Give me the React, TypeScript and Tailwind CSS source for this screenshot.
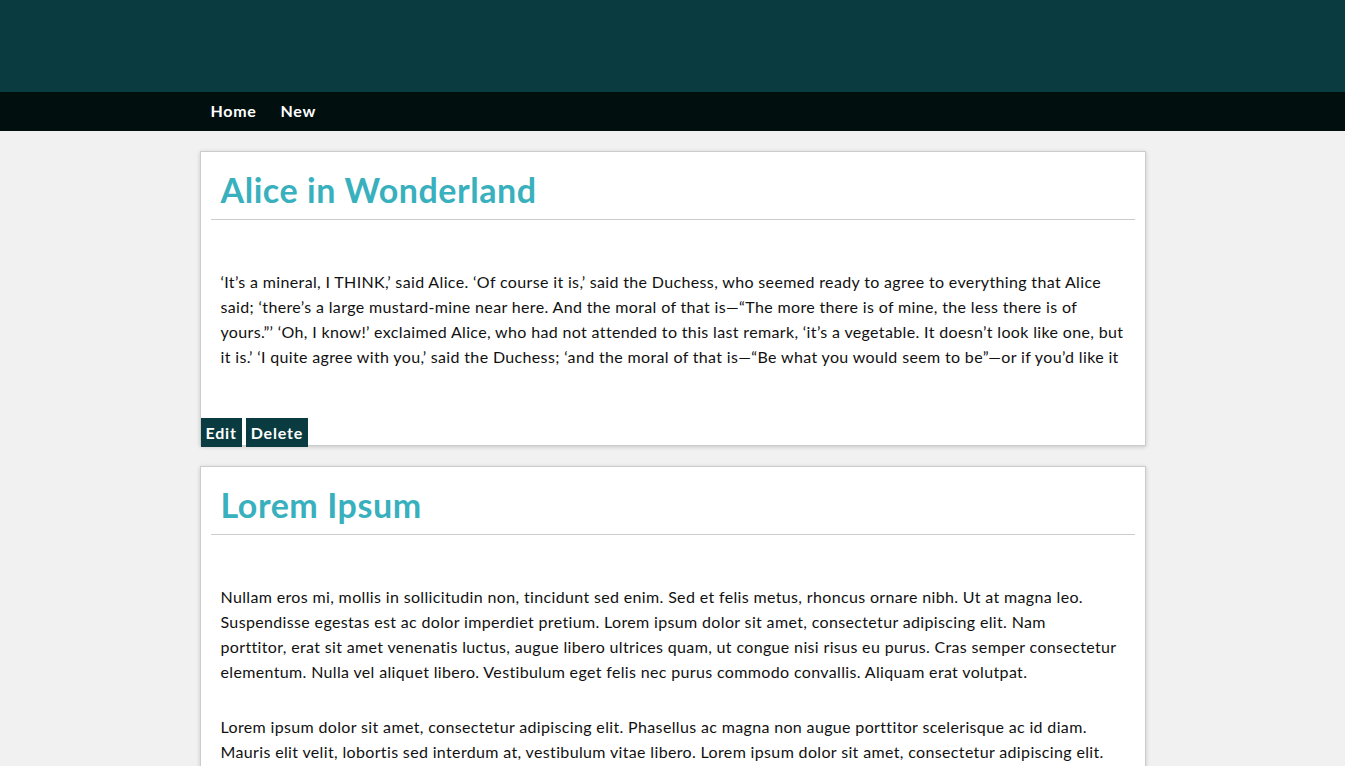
import React from 'react';

interface Post {
  title: string;
  paragraphs: string[];
  actions?: boolean;
}

const posts: Post[] = [
  {
    title: 'Alice in Wonderland',
    paragraphs: [
      '‘It’s a mineral, I THINK,’ said Alice. ‘Of course it is,’ said the Duchess, who seemed ready to agree to everything that Alice said; ‘there’s a large mustard-mine near here. And the moral of that is—“The more there is of mine, the less there is of yours.”’ ‘Oh, I know!’ exclaimed Alice, who had not attended to this last remark, ‘it’s a vegetable. It doesn’t look like one, but it is.’ ‘I quite agree with you,’ said the Duchess; ‘and the moral of that is—“Be what you would seem to be”—or if you’d like it',
    ],
    actions: true,
  },
  {
    title: 'Lorem Ipsum',
    paragraphs: [
      'Nullam eros mi, mollis in sollicitudin non, tincidunt sed enim. Sed et felis metus, rhoncus ornare nibh. Ut at magna leo. Suspendisse egestas est ac dolor imperdiet pretium. Lorem ipsum dolor sit amet, consectetur adipiscing elit. Nam\nporttitor, erat sit amet venenatis luctus, augue libero ultrices quam, ut congue nisi risus eu purus. Cras semper consectetur elementum. Nulla vel aliquet libero. Vestibulum eget felis nec purus commodo convallis. Aliquam erat volutpat.',
      'Lorem ipsum dolor sit amet, consectetur adipiscing elit. Phasellus ac magna non augue porttitor scelerisque ac id diam. Mauris elit velit, lobortis sed interdum at, vestibulum vitae libero. Lorem ipsum dolor sit amet, consectetur adipiscing elit. Quisque iaculis ligula ut ipsum mattis viverra. Nulla a libero metus. Integer gravida tempor metus eget condimentum.',
    ],
  },
];

function PostCard({ post }: { post: Post }) {
  return (
    <article className="bg-white border border-[#cccccc] shadow-[0_1px_4px_rgba(0,0,0,0.18)]">
      <div className="mx-[10px] border-b border-[#cccccc]">
        <h2 className="px-[10px] pt-[18px] pb-[10px] text-[34px] leading-[39px] tracking-[0.55px] font-bold text-[#38b0bd]">
          {post.title}
        </h2>
      </div>
      <div className="px-5 pt-[49px] pb-[49px] flex flex-col gap-[30px] text-[16px] leading-[25px] tracking-[0.35px] text-[#111111]">
        {post.paragraphs.map((p, i) => (
          <p key={i} className="whitespace-pre-line">{p}</p>
        ))}
      </div>
      {post.actions && (
        <div className="flex gap-1 -mb-[2px]">
          <button className="bg-[#0a3b40] text-white font-bold text-[16px] leading-[19px] tracking-[0.8px] px-[5px] py-[5px]">Edit</button>
          <button className="bg-[#0a3b40] text-white font-bold text-[16px] leading-[19px] tracking-[0.8px] px-[5px] py-[5px]">Delete</button>
        </div>
      )}
    </article>
  );
}

export default function App() {
  return (
    <div className="min-h-screen bg-[#f1f1f1] font-['Lato',sans-serif]">
      <header className="h-[92px] bg-[#0a3b40]" />
      <nav className="h-[39px] bg-[#010f0f]">
        <div className="w-[946px] mx-auto h-full flex items-center pb-px">
          <a href="#" className="pl-[11px] pr-[12px] text-white font-bold text-[16px] tracking-[0.7px]">Home</a>
          <a href="#" className="px-[12px] text-white font-bold text-[16px] tracking-[0.7px]">New</a>
        </div>
      </nav>
      <main className="w-[946px] mx-auto pt-5 pb-5 flex flex-col gap-5">
        {posts.map((post, i) => (
          <PostCard key={i} post={post} />
        ))}
      </main>
    </div>
  );
}
